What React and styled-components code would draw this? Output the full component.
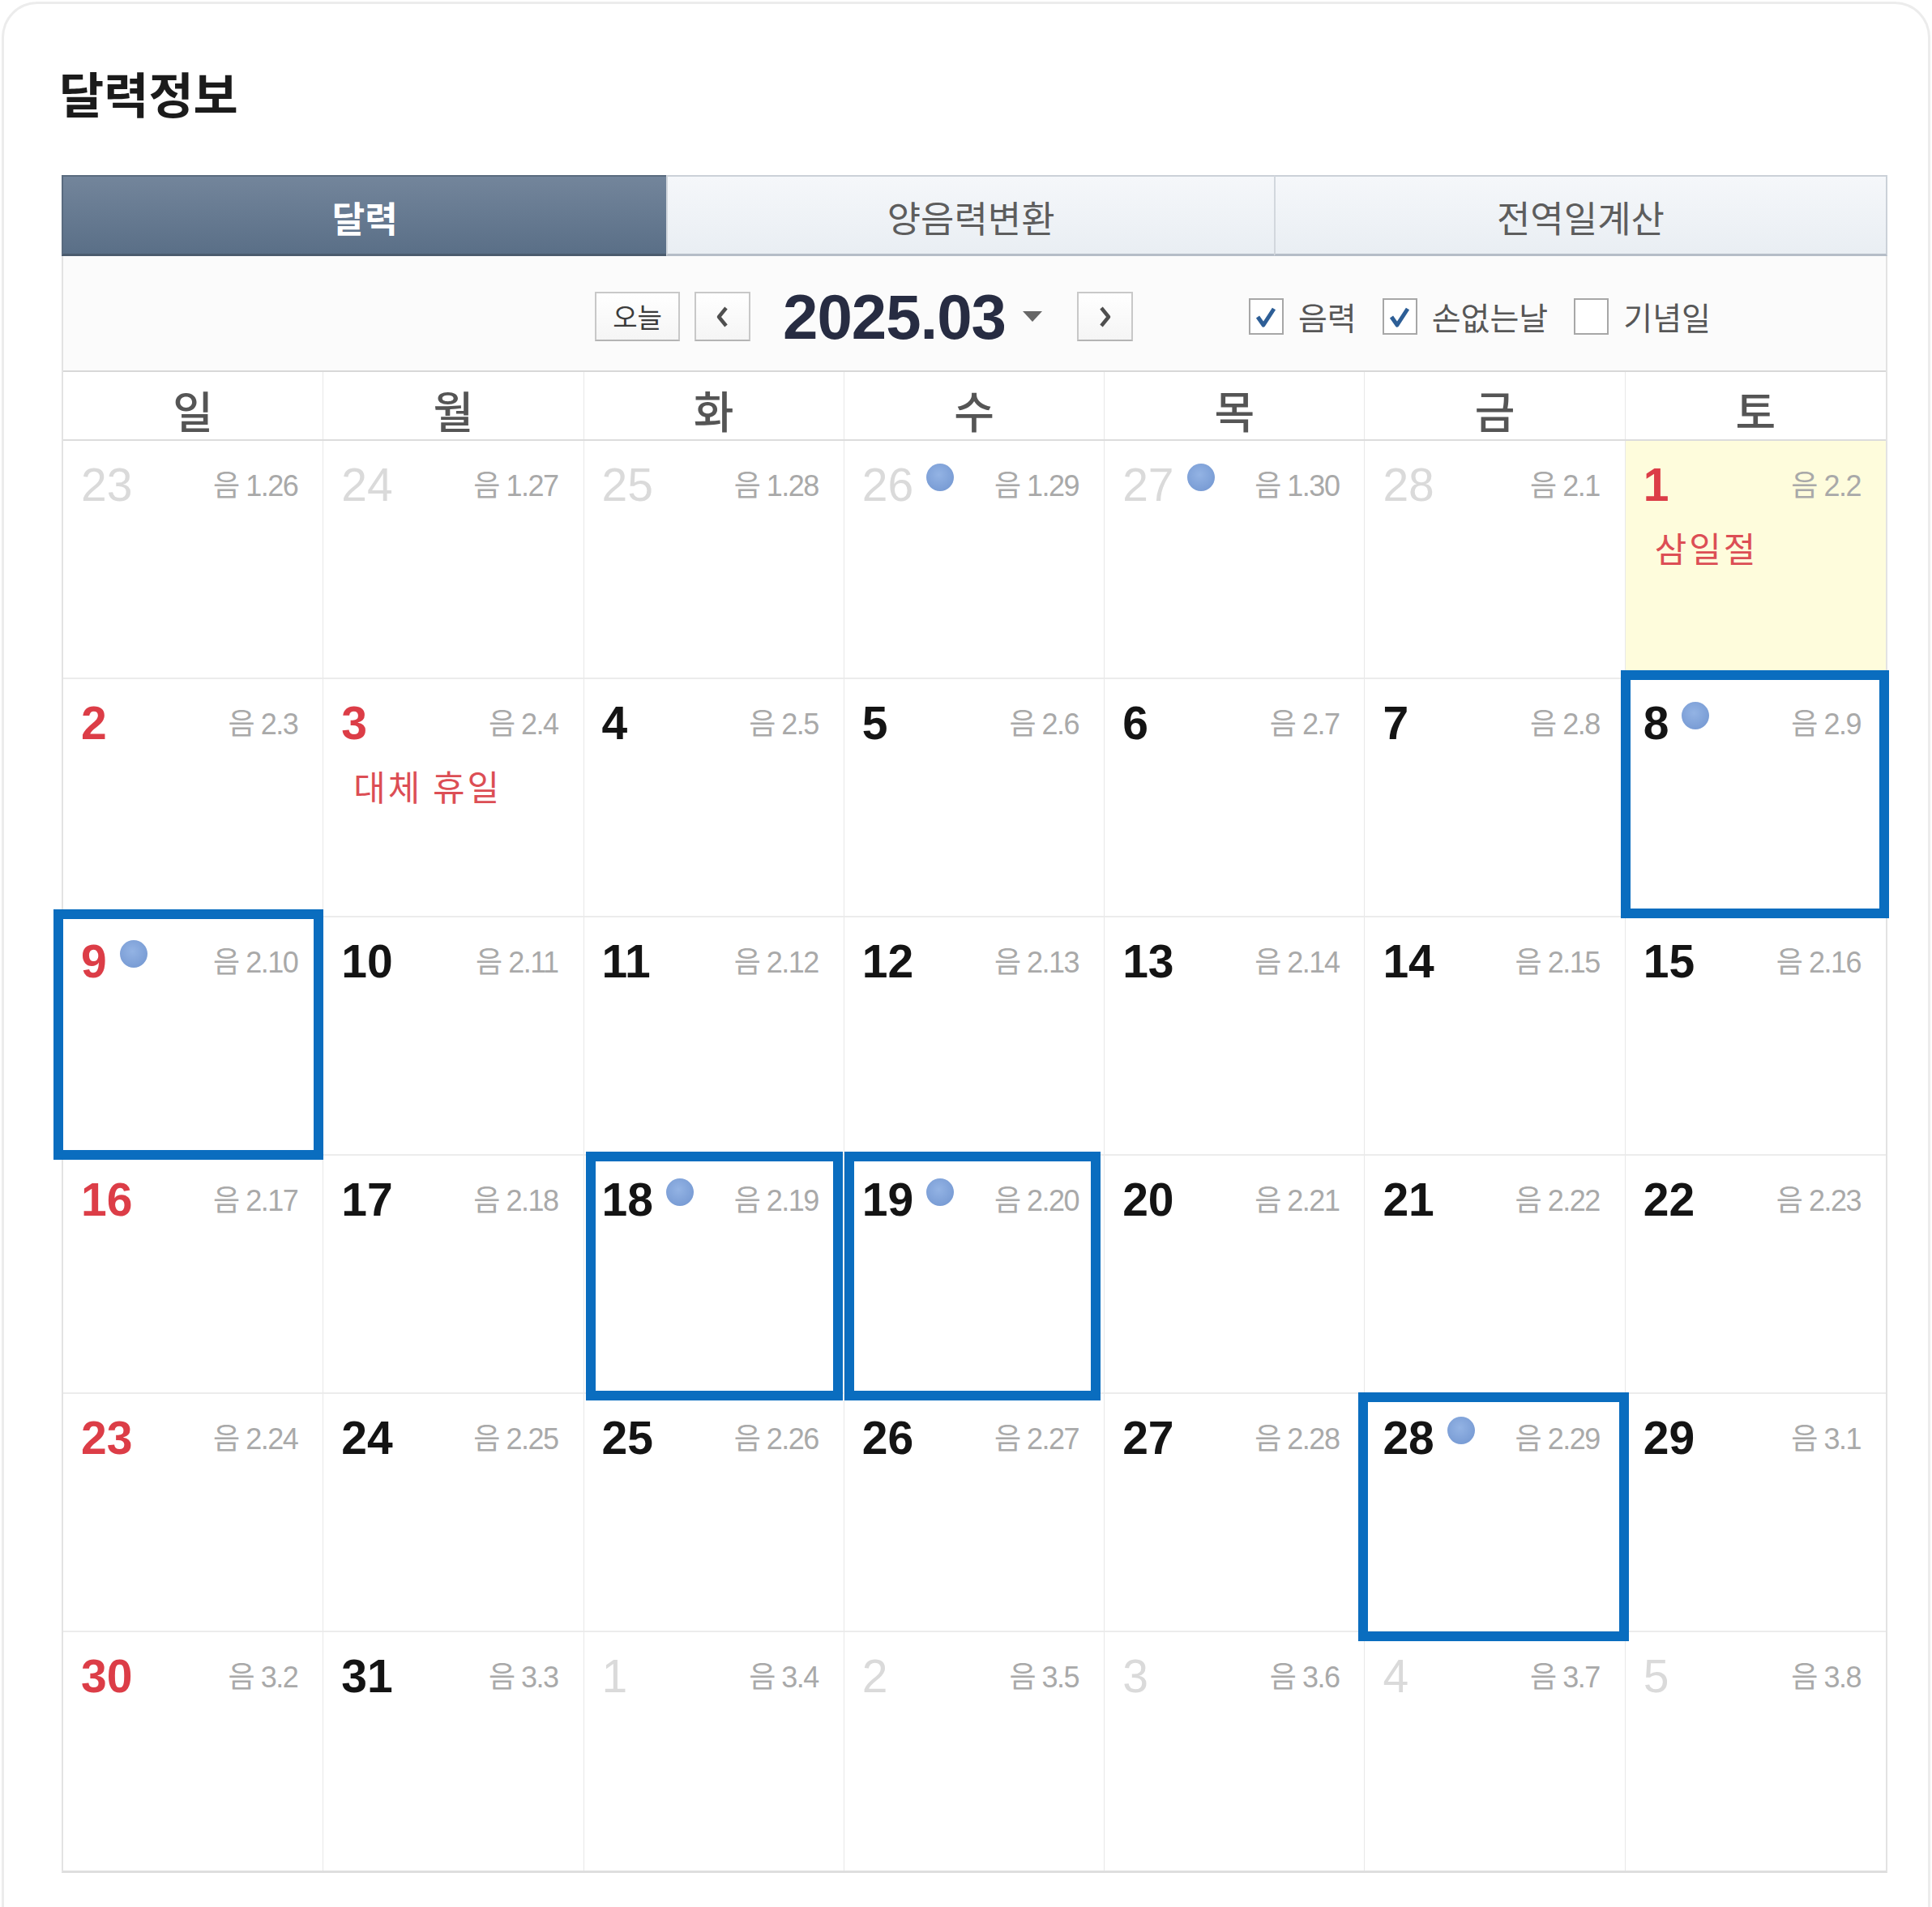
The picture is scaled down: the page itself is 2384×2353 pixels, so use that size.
import React from "react";
import styled, { createGlobalStyle, css } from "styled-components";

const KR = `"Noto Sans CJK KR", "Noto Sans", sans-serif`;
const NUM = `"Liberation Sans", "Noto Sans CJK KR", Arial, sans-serif`;
const NARROW = `"Liberation Sans Narrow", "Liberation Sans", "Noto Sans CJK KR", sans-serif`;

const GlobalStyle = createGlobalStyle`
	html, body {
		margin: 0;
		padding: 0;
		background: #fff;
	}
	body {
		font-family: ${KR};
	}
`;

const Card = styled.div`
	margin: 2px 2px 0 2px;
	border: 3px solid #ececec;
	border-bottom: 0;
	border-radius: 44px 44px 0 0;
	padding: 79px 50px 42px 71px;
	background: #fff;
`;

const Title = styled.h1`
	margin: 0 0 0 -3px;
	font: 700 60px/60px ${KR};
	color: #1b1b1b;
`;

const Tabs = styled.div`
	display: grid;
	grid-template-columns: 491fr 493fr 498fr;
	margin-top: 72px;
	height: 100px;
`;

const Tab = styled.div`
	display: flex;
	align-items: center;
	justify-content: center;
	box-sizing: border-box;
	padding-top: 4px;
	font: 400 45px/1 ${KR};
	color: #5d5d5d;
	background: linear-gradient(#f5f7fa, #e9eef3);
	border-top: 2px solid #cbd1d8;
	border-bottom: 3px solid #b5bdc7;
	border-left: 2px solid #d2d7dd;
	&:last-child {
		border-right: 2px solid #cbd1d8;
	}
	${(p) =>
		p.$active &&
		css`
			font-weight: 700;
			font-size: 44px;
			color: #fff;
			background: linear-gradient(#73859b, #5a6f87);
			border-top-color: #5a6b7f;
			border-bottom-color: #4b5b6d;
			border-left-color: #5a6b7f;
		`}
`;

const Board = styled.div`
	border-left: 2px solid #e3e3e3;
	border-right: 2px solid #e3e3e3;
	border-bottom: 3px solid #dedede;
`;

const Toolbar = styled.div`
	display: flex;
	align-items: center;
	height: 143px;
	box-sizing: border-box;
	padding: 8px 0 0 656px;
	background: #fbfbfb;
	border-bottom: 2px solid #d8d8d8;
`;

const NavButton = styled.button`
	display: flex;
	align-items: center;
	justify-content: center;
	box-sizing: border-box;
	height: 61px;
	width: ${(p) => (p.$wide ? 105 : 69)}px;
	margin-left: ${(p) => p.$gap || 0}px;
	padding: 0;
	border: 2px solid #c8c8c8;
	border-bottom-color: #b4b4b4;
	background: linear-gradient(#ffffff, #f5f5f5);
	font: 400 33px/1 ${KR};
	color: #3b3b3b;
`;

const MonthLabel = styled.div`
	margin-left: 40px;
	font: 700 78px/1 ${NUM};
	color: #272c42;
	letter-spacing: -1px;
`;

const Caret = styled.span`
	margin-left: 21px;
	width: 0;
	height: 0;
	border-left: 12px solid transparent;
	border-right: 12px solid transparent;
	border-top: 13px solid #676767;
`;

const Options = styled.div`
	display: flex;
	align-items: center;
	margin-left: 143px;
`;

const Box = styled.span`
	display: flex;
	align-items: center;
	justify-content: center;
	box-sizing: border-box;
	width: 43px;
	height: 45px;
	margin-left: ${(p) => (p.$first ? 0 : 32)}px;
	border: 2px solid #a7a7a7;
	background: #fff;
`;

const OptionLabel = styled.span`
	margin-left: 18px;
	font: 400 39px/1 ${KR};
	color: #575757;
`;

const Weekdays = styled.div`
	display: grid;
	grid-template-columns: repeat(7, 1fr);
	height: 85px;
	box-sizing: border-box;
	border-bottom: 2px solid #dcdcdc;
`;

const Weekday = styled.div`
	display: flex;
	align-items: center;
	justify-content: center;
	padding-top: 10px;
	font: 500 54px/1 ${KR};
	color: #555;
	border-right: 1px solid #e8e8e8;
	&:last-child {
		border-right: 0;
	}
`;

const Weeks = styled.div`
	display: grid;
	grid-template-columns: repeat(7, 1fr);
	grid-auto-rows: 294px;
`;

const Cell = styled.div`
	position: relative;
	box-sizing: border-box;
	padding: 26px 31px 0 22px;
	border-right: 1px solid #e8e8e8;
	border-bottom: 2px solid #ececec;
	background: ${(p) => (p.$yellow ? "#fefcdc" : "#fff")};
	&:nth-child(7n) {
		border-right: 0;
	}
	&:nth-last-child(-n + 7) {
		border-bottom: 0;
	}
`;

const DayHead = styled.div`
	display: flex;
	align-items: center;
	height: 56px;
`;

const DayNum = styled.span`
	font: 700 57px/56px ${NUM};
	color: ${(p) => (p.$red ? "#dc3d47" : "#141414")};
	${(p) =>
		p.$other &&
		css`
			font-weight: 400;
			color: #dadada;
		`}
`;

const Dot = styled.span`
	align-self: flex-start;
	width: 34px;
	height: 34px;
	margin: 2px 0 0 16px;
	border-radius: 50%;
	background: radial-gradient(circle at 45% 40%, #93b3e4, #7094cf);
`;

const Lunar = styled.span`
	margin-left: auto;
	padding-top: 4px;
	font: 400 36px/1 ${NARROW};
	color: #a9a9a9;
	letter-spacing: -1.5px;
	white-space: nowrap;
`;

const Holiday = styled.div`
	margin-top: 28px;
	padding-left: ${(p) => p.$indent}px;
	font: 400 43px/43px ${KR};
	color: #dc4e55;
	letter-spacing: 3px;
`;

const Highlight = styled.div`
	position: absolute;
	top: ${(p) => p.$t}px;
	right: ${(p) => p.$r}px;
	bottom: ${(p) => p.$b}px;
	left: ${(p) => p.$l}px;
	border: 12px solid #0a6dbf;
	pointer-events: none;
	z-index: 2;
`;

function Chevron({ dir }) {
	const pts = dir === "left" ? "14,4 5,15 14,26" : "5,4 14,15 5,26";
	return (
		<svg width="19" height="30" viewBox="0 0 19 30">
			<polyline points={pts} fill="none" stroke="#4f4f4f" strokeWidth="4.5" strokeLinejoin="round" />
		</svg>
	);
}

function Check() {
	return (
		<svg width="30" height="32" viewBox="0 0 30 32">
			<path d="M5 16 L12 26 L25 6" fill="none" stroke="#2d5e96" strokeWidth="5" strokeLinejoin="round" />
		</svg>
	);
}

const DAYS = ["일", "월", "화", "수", "목", "금", "토"];

// [day, lunar, flags]
const WEEKS = [
	[
		[23, "1.26", { other: true }],
		[24, "1.27", { other: true }],
		[25, "1.28", { other: true }],
		[26, "1.29", { other: true, dot: true }],
		[27, "1.30", { other: true, dot: true }],
		[28, "2.1", { other: true }],
		[1, "2.2", { red: true, yellow: true, holiday: "삼일절", indent: 14 }],
	],
	[
		[2, "2.3", {}],
		[3, "2.4", { red: true, holiday: "대체 휴일", indent: 15 }],
		[4, "2.5", {}],
		[5, "2.6", {}],
		[6, "2.7", {}],
		[7, "2.8", {}],
		[8, "2.9", { dot: true, box: [-11, -4, -3, -6] }],
	],
	[
		[9, "2.10", { dot: true, box: [-10, -1, -7, -12] }],
		[10, "2.11", {}],
		[11, "2.12", {}],
		[12, "2.13", {}],
		[13, "2.14", {}],
		[14, "2.15", {}],
		[15, "2.16", {}],
	],
	[
		[16, "2.17", {}],
		[17, "2.18", {}],
		[18, "2.19", { dot: true, box: [-5, 1, -10, 2] }],
		[19, "2.20", { dot: true, box: [-5, 4, -10, 0] }],
		[20, "2.21", {}],
		[21, "2.22", {}],
		[22, "2.23", {}],
	],
	[
		[23, "2.24", {}],
		[24, "2.25", {}],
		[25, "2.26", {}],
		[26, "2.27", {}],
		[27, "2.28", {}],
		[28, "2.29", { dot: true, box: [-2, -5, -13, -8] }],
		[29, "3.1", {}],
	],
	[
		[30, "3.2", {}],
		[31, "3.3", {}],
		[1, "3.4", { other: true }],
		[2, "3.5", { other: true }],
		[3, "3.6", { other: true }],
		[4, "3.7", { other: true }],
		[5, "3.8", { other: true }],
	],
];

const OPTIONS = [
	{ label: "음력", checked: true },
	{ label: "손없는날", checked: true },
	{ label: "기념일", checked: false },
];

function App() {
	return (
		<>
			<GlobalStyle />
			<Card>
				<Title>달력정보</Title>
				<Tabs>
					<Tab $active>달력</Tab>
					<Tab>양음력변환</Tab>
					<Tab>전역일계산</Tab>
				</Tabs>
				<Board>
					<Toolbar>
						<NavButton $wide>오늘</NavButton>
						<NavButton $gap={18}>
							<Chevron dir="left" />
						</NavButton>
						<MonthLabel>2025.03</MonthLabel>
						<Caret />
						<NavButton $gap={43}>
							<Chevron dir="right" />
						</NavButton>
						<Options>
							{OPTIONS.map((o, i) => (
								<React.Fragment key={o.label}>
									<Box $first={i === 0}>{o.checked && <Check />}</Box>
									<OptionLabel>{o.label}</OptionLabel>
								</React.Fragment>
							))}
						</Options>
					</Toolbar>
					<Weekdays>
						{DAYS.map((d) => (
							<Weekday key={d}>{d}</Weekday>
						))}
					</Weekdays>
					<Weeks>
						{WEEKS.flatMap((week, wi) =>
							week.map(([day, lunar, f], di) => (
								<Cell key={`${wi}-${di}`} $yellow={f.yellow}>
									<DayHead>
										<DayNum $other={f.other} $red={f.red || (di === 0 && !f.other)}>
											{day}
										</DayNum>
										{f.dot && <Dot />}
										<Lunar>음 {lunar}</Lunar>
									</DayHead>
									{f.holiday && <Holiday $indent={f.indent}>{f.holiday}</Holiday>}
									{f.box && <Highlight $t={f.box[0]} $r={f.box[1]} $b={f.box[2]} $l={f.box[3]} />}
								</Cell>
							))
						)}
					</Weeks>
				</Board>
			</Card>
		</>
	);
}

export default App;
